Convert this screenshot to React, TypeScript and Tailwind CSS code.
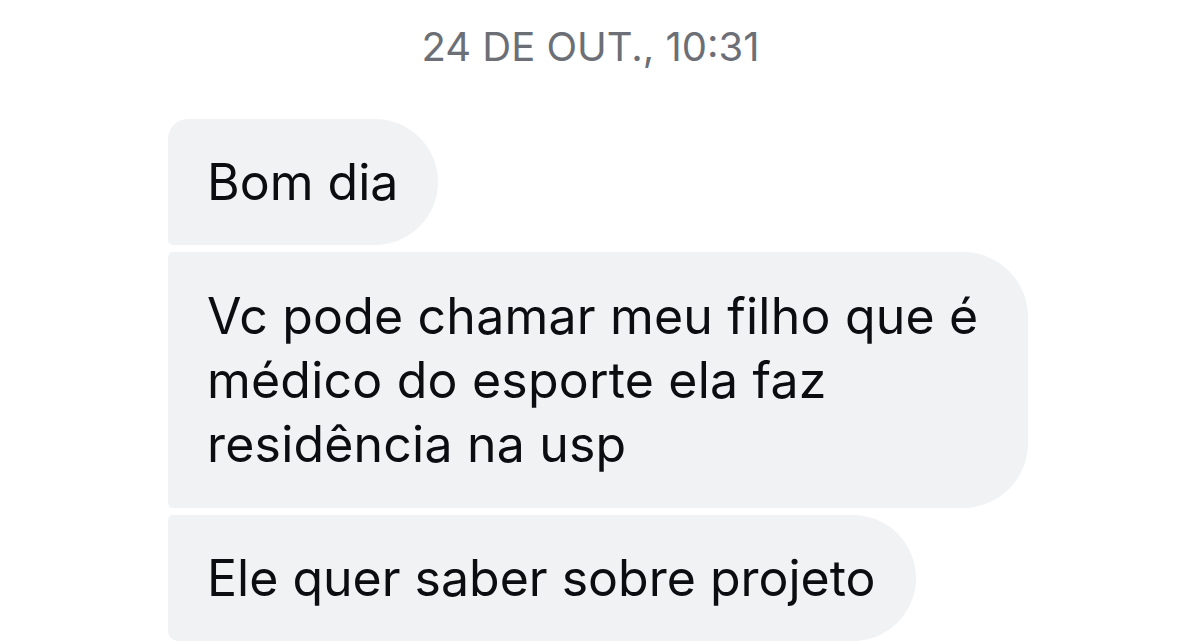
export default function App() {
  return (
    <main className="h-[644px] w-[1179px] overflow-hidden bg-white font-['Inter','Liberation_Sans',sans-serif]">
      <div className="flex h-[94px] items-center justify-center pl-[2px] text-[40px] leading-[48px] text-[#6c6f76]">
        24 DE OUT., 10:31
      </div>
      <div className="flex flex-col items-start gap-[7px] pl-[168px] pt-[25px] text-[50px] leading-[64px] text-[#0c0d10]">
        <div className="rounded-tl-[20px] rounded-tr-[63px] rounded-br-[63px] rounded-bl-[5px] bg-[#f1f2f4] py-[31px] pl-[39px] pr-[40px]">
          Bom dia
        </div>
        <div className="w-[860px] rounded-tl-[5px] rounded-tr-[65px] rounded-br-[65px] rounded-bl-[5px] bg-[#f1f2f4] py-[32px] pl-[39px] pr-[40px] tracking-[0.2px]">
          <span className="block">Vc pode chamar meu filho que é</span>
          <span className="block">médico do esporte ela faz</span>
          <span className="block">residência na usp</span>
        </div>
        <div className="rounded-tl-[5px] rounded-tr-[63px] rounded-br-[63px] rounded-bl-[10px] bg-[#f1f2f4] py-[31px] pl-[39px] pr-[40px]">
          Ele quer saber sobre projeto
        </div>
      </div>
    </main>
  );
}
